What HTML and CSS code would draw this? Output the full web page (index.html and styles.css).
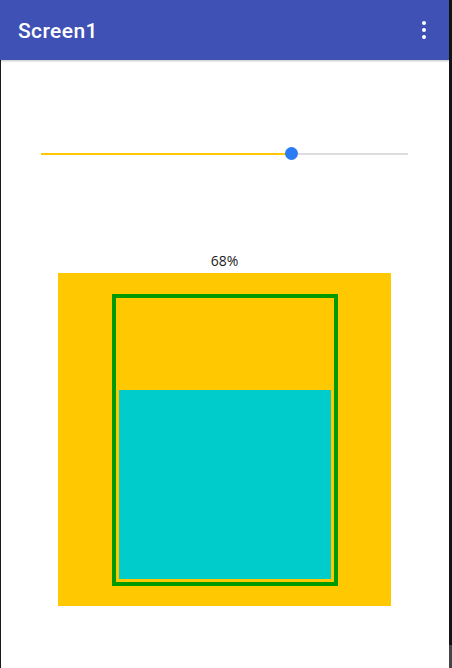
FILE: index.html
```html
<!DOCTYPE html>
<html>
<head>
<meta charset="utf-8">
<link rel="stylesheet" href="styles.css">
</head>
<body>
<div class="device">
  <div class="screen">
    <header class="appbar">
      <span class="title">Screen1</span>
      <span class="menu"><i></i><i></i><i></i></span>
    </header>
    <main class="content">
      <div class="slider">
        <div class="track-fill"></div>
        <div class="thumb"></div>
        <div class="track-rest"></div>
      </div>
      <div class="label">68%</div>
      <div class="canvas">
        <div class="tank">
          <div class="water" style="height:68%"></div>
        </div>
      </div>
    </main>
  </div>
  <div class="edge">
    <div class="edge-top"></div>
    <div class="edge-bottom"></div>
  </div>
</div>
</body>
</html>
```
FILE: styles.css
```css
html, body {
  margin: 0;
  padding: 0;
  background: #111;
}
.device {
  display: flex;
  width: 452px;
  height: 668px;
}
.screen {
  width: 449px;
  height: 668px;
  display: flex;
  flex-direction: column;
  background: #fff;
  font-family: Roboto, "Noto Sans", sans-serif;
}
.edge {
  width: 3px;
  display: flex;
  flex-direction: column;
}
.edge-top {
  height: 645px;
  background: #141414;
}
.edge-bottom {
  flex: 1;
  background: #454545;
}
.appbar {
  height: 60px;
  flex: none;
  background: #3F51B5;
  display: flex;
  align-items: center;
  justify-content: space-between;
  padding: 0 0 0 18px;
  box-shadow: 0 1px 2px rgba(0,0,0,0.25);
  position: relative;
  z-index: 1;
}
.title {
  color: #fff;
  font-size: 21px;
  font-weight: 500;
  letter-spacing: 0.4px;
  margin-top: 1px;
}
.menu {
  display: flex;
  flex-direction: column;
  gap: 3px;
  width: 4px;
  margin-right: 23px;
}
.menu i {
  display: block;
  width: 4px;
  height: 4px;
  border-radius: 50%;
  background: #fff;
}
.content {
  flex: 1;
  display: flex;
  flex-direction: column;
  border-left: 1px solid #1a1a1a;
}
.slider {
  margin: 87px 0 0 40px;
  width: 367px;
  height: 13px;
  display: flex;
  align-items: center;
}
.track-fill {
  width: 250px;
  height: 2px;
  background: #FFC800;
}
.thumb {
  width: 13px;
  height: 13px;
  border-radius: 50%;
  background: #2B7BF5;
  margin: 0 -6.5px;
  position: relative;
  z-index: 1;
  flex: none;
}
.track-rest {
  flex: 1;
  height: 2px;
  background: #DDDDDD;
}
.label {
  margin: 92px 0 0 57px;
  width: 333px;
  height: 18px;
  line-height: 18px;
  text-align: center;
  font-size: 14px;
  color: #222;
  font-family: "Open Sans", Roboto, sans-serif;
}
.canvas {
  margin: 3px 0 0 57px;
  width: 333px;
  height: 333px;
  box-sizing: border-box;
  padding: 21px 53px 20px 54px;
  background: #FFC800;
  display: flex;
}
.tank {
  flex: 1;
  border: 4px solid #009A00;
  padding: 3px;
  display: flex;
  flex-direction: column;
  justify-content: flex-end;
}
.water {
  background: #00CCCC;
}
```
